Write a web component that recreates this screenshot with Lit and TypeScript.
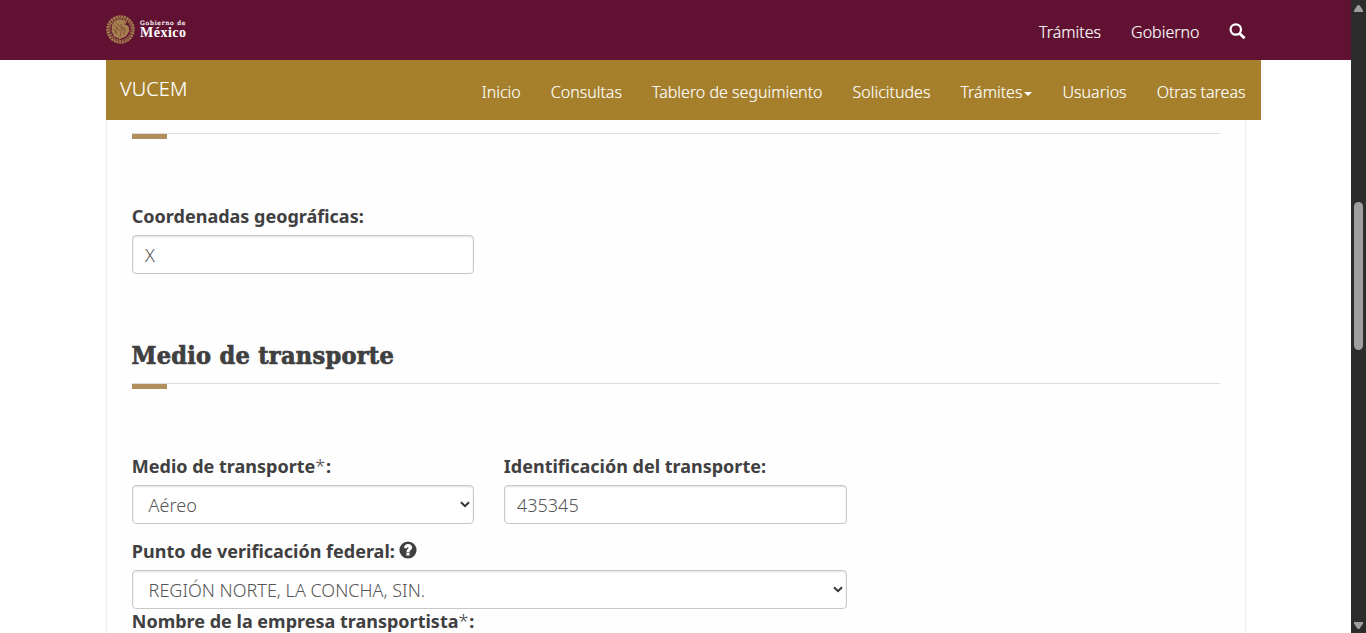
import { LitElement, html, css, svg } from "lit";
import { customElement, property } from "lit/decorators.js";

const chevron = html`<svg class="chev" width="10" height="7" viewBox="0 0 10 7"><path d="M1 1.2 L5 5.1 L9 1.2" fill="none" stroke="#333" stroke-width="2"/></svg>`;

@customElement("form-field")
class FormField extends LitElement {
  @property() label = "";
  @property() value = "";
  @property({ type: Boolean }) required = false;
  @property({ type: Boolean }) help = false;
  @property({ type: Boolean }) select = false;

  static styles = css`
    :host { display: block; }
    .label { display: flex; align-items: center; height: 25px; margin: 0 0 6px -0.2px; font-weight: 700; font-size: 18px; line-height: 25px; white-space: pre; color: #404041; }
    .star { font-weight: 300; width: 10.8px; }
    .help { margin: -3px 0 0 4.6px; }
    .box { box-sizing: border-box; height: 39px; border: 1px solid #c8c8c8; border-radius: 4px; background: #fff; box-shadow: inset 0 1px 2px rgba(0, 0, 0, 0.12); display: flex; align-items: center; justify-content: space-between; padding: 1px 4px 0 12px; font-weight: 300; font-size: 18px; line-height: 25px; color: #555; }
    .box.sel { padding: 2px 3px 0 15.6px; }
    .chev { margin-top: -3px; }
  `;

  render() {
    return html`
      <div class="label"><span>${this.label}</span>${this.required ? html`<span class="star">*</span>` : ""}<span>:</span>${this.help
        ? html`<svg class="help" width="18" height="18" viewBox="0 0 18 18"><circle cx="9" cy="9" r="8.6" fill="#404041"/><path d="M5.1 7.2 C5.1 4.6 6.8 3.1 9.1 3.1 C11.5 3.1 13.1 4.5 13.1 6.4 C13.1 8.9 10.5 9.1 10.5 10.9 H7.5 C7.5 8.4 9.5 8 9.5 6.8 C9.5 5.8 8.2 5.8 8.1 7.2 Z M7.4 11.6 H10.5 V14.4 H7.4 Z" fill="#fff"/></svg>`
        : ""}</div>
      <div class="box ${this.select ? "sel" : ""}"><span>${this.value}</span>${this.select ? chevron : ""}</div>
    `;
  }
}

const ring = Array.from({ length: 24 }, (_, i) => i * 15);

@customElement("app-root")
class AppRoot extends LitElement {
  static styles = css`
    :host { display: flex; width: 1366px; height: 633px; overflow: hidden; background: #fff; font-family: "Noto Sans", "Open Sans", sans-serif; }
    .page { flex: 1; min-width: 0; display: flex; flex-direction: column; }
    .top { flex: none; box-sizing: border-box; height: 60px; background: #611232; padding: 0 105px 0 106px; display: flex; justify-content: space-between; }
    .brand { display: flex; align-items: center; gap: 5px; color: #fff; height: 58px; }
    .words { font-family: "DejaVu Serif", serif; display: flex; flex-direction: column; white-space: nowrap; }
    .gob { font-size: 6px; line-height: 7px; letter-spacing: 0.8px; -webkit-text-stroke: 0.2px #fff; }
    .mex { font-family: "Liberation Serif", serif; font-size: 14px; line-height: 14px; font-weight: 700; letter-spacing: 0.5px; }
    .links { display: flex; gap: 30px; height: 60px; padding-top: 4px; box-sizing: border-box; align-items: center; color: #fff; font-size: 16px; font-weight: 300; white-space: nowrap; -webkit-text-stroke: 0.15px #fff; }
    .top .links { margin-right: -0.5px; }
    .glass { margin: -2px 1px 0 -1px; }
    .bar { flex: none; box-sizing: border-box; width: 1155px; height: 60px; margin-left: 106px; background: #a57f2c; padding: 0 15.5px 0 14px; display: flex; justify-content: space-between; color: #fff; }
    .app { font-size: 20px; font-weight: 300; line-height: 58px; letter-spacing: 0.1px; -webkit-text-stroke: 0.15px #fff; }
    .trigger { display: flex; align-items: center; gap: 2px; }
    .caret { border: 4px solid transparent; border-top-color: #fff; border-bottom: 0; margin-top: 3px; }
    .content { flex: 1; box-sizing: border-box; width: 1140px; margin-left: 106px; border: solid #eee; border-width: 0 1px; background: #fefefe; padding: 13px 25px 0; display: flex; flex-direction: column; }
    .rule { flex: none; height: 6px; border-top: 1px solid #ddd; box-sizing: border-box; }
    .dash { width: 35px; height: 5px; background: #b38e5d; }
    .w1 { width: 342px; }
    .w2 { width: 715px; }
    .first { margin-top: 65px; }
    .title { margin: 64px 0 9px -0.5px; height: 36px; line-height: 36px; font-family: "DejaVu Serif", serif; font-stretch: condensed; font-weight: 700; font-size: 25px; letter-spacing: 0.28px; -webkit-text-stroke: 0.7px #404041; color: #404041; white-space: nowrap; }
    .pair { display: grid; grid-template-columns: 342px 343px; column-gap: 30px; margin-top: 65px; }
    .third { margin-top: 15px; }
    .fourth { margin-top: 0; }
    .scroll { flex: none; width: 15px; box-sizing: border-box; background: #2c2c2c; display: flex; flex-direction: column; align-items: center; padding: 5px 0 4px; }
    .thumb { width: 9px; height: 148px; border-radius: 5px; background: #9f9f9f; margin: 190px 0 auto; }
  `;

  render() {
    return html`
      <div class="page">
        <header class="top">
          <div class="brand">
            <svg width="29" height="29" viewBox="0 0 29 29">
              <circle cx="14.5" cy="14.5" r="13" fill="none" stroke="#a57f4c" stroke-width="2.4" stroke-dasharray="2.2 .6"/>
              <circle cx="14.5" cy="14.5" r="11" fill="none" stroke="#8c6040" stroke-width="1"/>
              ${ring.map((a) => svg`<path d="M14.5 2.8 l1 1.8" stroke="#c9a06a" stroke-width=".6" transform="rotate(${a} 14.5 14.5)"/>`)}
              <path d="M6 10 Q9 4.5 14 4.5 L19 5.5 L21 8 L18 9 L22.5 11 L23.5 16 L20 21.5 L14 24 L8 21.5 L5.5 16 Z" fill="#a57f4c"/>
              <path d="M8 10 L14 16 M10 8 L17 14 M7 14 L12 19 M14 9 L20 16 M11 12 L9 19 M16 12 L14 22 M18 13 L18 20" stroke="#7a4038" stroke-width=".7" fill="none"/>
            </svg>
            <div class="words"><span class="gob">Gobierno de</span><span class="mex">México</span></div>
          </div>
          <nav class="links">
            <span>Trámites</span><span>Gobierno</span>
            <svg class="glass" width="17" height="17" viewBox="0 0 17 17"><circle cx="6.8" cy="6.5" r="5.2" fill="none" stroke="#fff" stroke-width="2.2"/><path d="M10.6 10.4 L15.6 15.2" stroke="#fff" stroke-width="2.8"/></svg>
          </nav>
        </header>
        <div class="bar">
          <span class="app">VUCEM</span>
          <nav class="links">
            <span>Inicio</span><span>Consultas</span><span>Tablero de seguimiento</span><span>Solicitudes</span>
            <span class="trigger">Trámites<i class="caret"></i></span><span>Usuarios</span><span>Otras tareas</span>
          </nav>
        </div>
        <main class="content">
          <div class="rule wide"><div class="dash"></div></div>
          <form-field class="w1 first" label="Coordenadas geográficas" value="X"></form-field>
          <div class="title">Medio de transporte</div>
          <div class="rule"><div class="dash"></div></div>
          <div class="pair">
            <form-field label="Medio de transporte" value="Aéreo" required select></form-field>
            <form-field label="Identificación del transporte" value="435345"></form-field>
          </div>
          <form-field class="w2 third" label="Punto de verificación federal" value="REGIÓN NORTE, LA CONCHA, SIN." help select></form-field>
          <form-field class="w2 fourth" label="Nombre de la empresa transportista" required></form-field>
        </main>
      </div>
      <div class="scroll">
        <svg width="9" height="7" viewBox="0 0 9 7"><path d="M3.3 .6 Q4.5 -.6 5.7 .6 L9 5.5 V7 H0 V5.5 Z" fill="#9f9f9f"/></svg>
        <div class="thumb"></div>
        <svg width="9" height="7" viewBox="0 0 9 7"><path d="M3.3 6.4 Q4.5 7.6 5.7 6.4 L9 1.5 V0 H0 V1.5 Z" fill="#9f9f9f"/></svg>
      </div>
    `;
  }
}
